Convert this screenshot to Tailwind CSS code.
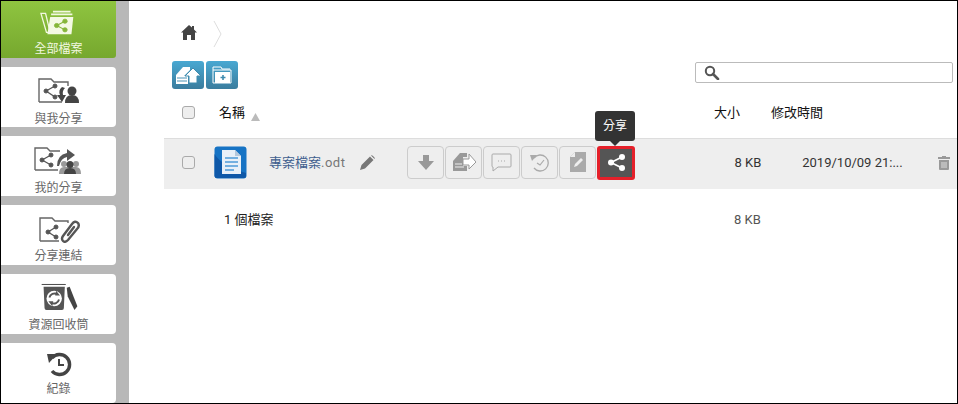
<!DOCTYPE html>
<html lang="zh-Hant">
<head>
<meta charset="UTF-8">
<title>全部檔案</title>
<script src="https://cdn.jsdelivr.net/npm/@tailwindcss/browser@4"></script>
</head>
<body class="bg-white overflow-hidden">
<div class="w-[958px] h-[404px] border border-black flex overflow-hidden font-['Roboto','Noto_Sans_CJK_TC',sans-serif]">
  <!-- sidebar -->
  <nav class="w-[128px] h-full bg-[#b8b8b8] shrink-0 flex flex-col gap-[9px] pr-[13px] overflow-hidden">
    <a class="h-[57px] shrink-0 rounded-br-[3px] bg-gradient-to-b from-[#8fc440] to-[#76a82e] flex flex-col items-center text-[#f2f8e0]">
      <svg class="mt-[9px]" width="37" height="25" viewBox="0 0 40 29" preserveAspectRatio="none">
        <path d="M1 4 L6 4 L11 26 L7 26 Z" fill="none" stroke="#f2f8e0" stroke-width="1.4"/>
        <path d="M14 1 H33 V3 H14Z M12 4 H35 V6 H12Z" fill="#f2f8e0"/>
        <path d="M11 8 H36 L34 28 H8 Z" fill="#f4f9e4"/>
        <g fill="#86b63a" stroke="#86b63a"><circle cx="18" cy="18" r="2.4"/><circle cx="27" cy="13" r="2.4"/><circle cx="27" cy="23" r="2.4"/><path d="M18 18 L27 13 M18 18 L27 23" stroke-width="1.2" fill="none"/></g>
      </svg>
      <span class="text-[12px] leading-[16px] mt-[6px]">全部檔案</span>
    </a>
    <a class="h-[60px] shrink-0 rounded-r-[4px] bg-white flex flex-col items-center text-[#666]">
      <svg class="mt-[10px]" width="42" height="28" viewBox="0 0 42 28">
        <path d="M1 25 V2 H13 L16 5 H30 V9 M24 25 H1" fill="none" stroke="#666" stroke-width="1.4"/>
        <g fill="#555" stroke="#555"><circle cx="8" cy="14" r="2"/><circle cx="17" cy="9" r="2"/><circle cx="17" cy="20" r="2"/><path d="M8 14 L17 9 M8 14 L17 20" stroke-width="1.4" fill="none"/></g>
        <path d="M24 10 Q20 13 22 18 H19 L24 25 L28 18 H25 Q24 14 27 11Z" fill="#444"/>
        <circle cx="34" cy="14" r="4.5" fill="#444"/><path d="M27 26 Q27 18 34 18 Q41 18 41 26Z" fill="#444"/>
      </svg>
      <span class="text-[12px] leading-[16px] mt-[6px]">與我分享</span>
    </a>
    <a class="h-[60px] shrink-0 rounded-r-[4px] bg-white flex flex-col items-center text-[#666]">
      <svg class="mt-[10px]" width="50" height="28" viewBox="0 0 50 28">
        <path d="M1 24 V2 H13 L16 5 H26 M24 24 H1 M1 24" fill="none" stroke="#666" stroke-width="1.4"/>
        <g fill="#555" stroke="#555"><circle cx="8" cy="14" r="2"/><circle cx="17" cy="9" r="2"/><circle cx="17" cy="19" r="2"/><path d="M8 14 L17 9 M8 14 L17 19" stroke-width="1.4" fill="none"/></g>
        <path d="M23 20 Q23 9 33 7 V3 L41 9 L33 15 V11 Q27 12 25 20Z" fill="#555"/>
        <circle cx="30" cy="18" r="3" fill="#999"/><circle cx="42" cy="18" r="3" fill="#999"/><path d="M25 28 Q25 21 30 21 H42 Q47 21 47 28Z" fill="#999"/>
        <circle cx="36" cy="18.500" r="3.500" fill="#444"/><path d="M30 28 Q30 22 36 22 Q42 22 42 28Z" fill="#444"/>
      </svg>
      <span class="text-[12px] leading-[16px] mt-[6px]">我的分享</span>
    </a>
    <a class="h-[60px] shrink-0 rounded-r-[4px] bg-white flex flex-col items-center text-[#666]">
      <svg class="mt-[11px] ml-[2px]" width="42" height="27" viewBox="0 0 42 27">
        <path d="M1 25 V2 H13 L16 5 H29 V7 M20 25 H1" fill="none" stroke="#666" stroke-width="1.4"/>
        <g fill="#555" stroke="#555"><circle cx="9" cy="16" r="2"/><circle cx="17" cy="11" r="2"/><circle cx="17" cy="21" r="2"/><path d="M9 16 L17 11 M9 16 L17 21" stroke-width="1.4" fill="none"/></g>
        <g fill="none" stroke="#555" stroke-width="2.4" stroke-linecap="round"><path d="M24 20 L33 8 Q36 4 39 7 Q41 10 38 13 L29 24 Q26 27 24 25 Q22 23 24 20"/><path d="M29 19 L35 11"/></g>
      </svg>
      <span class="text-[12px] leading-[16px] mt-[5px]">分享連結</span>
    </a>
    <a class="h-[60px] shrink-0 rounded-r-[4px] bg-white flex flex-col items-center text-[#666]">
      <svg class="mt-[9px] ml-[3px]" width="38" height="28" viewBox="0 0 38 29">
        <path d="M0 1 H25 V2 H0Z" fill="#444"/>
        <path d="M2 4 H24 L23 26 Q23 28 21 28 H5 Q3 28 3 26Z" fill="#555"/>
        <circle cx="13" cy="16" r="8" fill="#fff"/>
        <g fill="none" stroke="#555" stroke-width="2"><path d="M8 15 A5.500 5.500 0 0 1 16 11.500"/><path d="M18 17 A5.500 5.500 0 0 1 10 20.500"/></g>
        <path d="M15 8 L19 13 L14 13Z M11 24 L7 19 L12 19Z" fill="#555"/>
        <path d="M26 5 L29 4 L37 24 L34 28 L27 14Z" fill="#444"/>
      </svg>
      <span class="text-[12px] leading-[16px] mt-[6px]">資源回收筒</span>
    </a>
    <a class="h-[60px] shrink-0 rounded-r-[4px] bg-white flex flex-col items-center text-[#666]">
      <svg class="mt-[8px]" width="26" height="26" viewBox="0 0 26 26">
        <path d="M6 7 A10 10 0 1 1 6 20" fill="none" stroke="#444" stroke-width="3.400"/>
        <path d="M1 3 L11 3 L3 12Z" fill="#444"/>
        <path d="M13 8 V14 H18" fill="none" stroke="#444" stroke-width="2"/>
      </svg>
      <span class="text-[12px] leading-[16px] mt-[4px]">紀錄</span>
    </a>
  </nav>

  <!-- main -->
  <main class="flex-1 min-w-0 flex flex-col relative">
    <div class="h-[60px] shrink-0 pl-[52px] flex items-start">
      <svg class="mt-[24px]" width="16" height="15" viewBox="0 0 16 15">
        <path d="M8 0 L11 2.600 V1 H13 V4.400 L16 7.500 L14 7.500 V15 H10 V10 H6 V15 H2 V7.500 H0Z" fill="#444"/>
      </svg>
      <svg class="mt-[20px] ml-[16px]" width="10" height="26" viewBox="0 0 10 26">
        <path d="M1 0 L8 13 L1 26" fill="none" stroke="#ddd" stroke-width="1"/>
      </svg>
    </div>
    <div class="h-[40px] shrink-0 pl-[43px] pr-[4px] flex items-start gap-[2px]">
      <button class="w-[32px] h-[28px] rounded-[3px] bg-gradient-to-b from-[#48a8d2] to-[#3a7d9e] flex items-center justify-center">
        <svg width="26" height="20" viewBox="0 0 26 20">
          <path d="M1 10 L8 2 H15 V5 L9 11 H13 V19 H1Z" fill="#fff"/>
          <path d="M2 13 H12 M2 16 H12" stroke="#4a93b5" stroke-width="1"/>
          <path d="M18 3 L26 11 H22 V18 H14 V11 H10Z" fill="#fff" stroke="#3f8bae" stroke-width="1"/>
        </svg>
      </button>
      <button class="w-[32px] h-[28px] rounded-[3px] bg-gradient-to-b from-[#48a8d2] to-[#3a7d9e] flex items-center justify-center">
        <svg width="20" height="18" viewBox="0 0 20 18">
          <path d="M1 4 V1 H9 L10 3 H18" fill="none" stroke="#fff" stroke-width="1"/>
          <path d="M1 4 H19 V17 H1Z" fill="none" stroke="#fff" stroke-width="1"/>
          <path d="M3 6 H18 V17 H3Z" fill="#fff"/>
          <path d="M11 9 V14 M8.500 11.500 H13.500" stroke="#3f8bae" stroke-width="1.600"/>
        </svg>
      </button>
      <div class="ml-auto w-[258px] h-[21px] mt-px border border-[#bbb] rounded-[2px] flex items-center pl-[8px]">
        <svg width="16" height="15" viewBox="0 0 16 15">
          <circle cx="6" cy="6" r="4.200" fill="none" stroke="#555" stroke-width="2"/>
          <path d="M9 9 L14 14" stroke="#555" stroke-width="2.600" stroke-linecap="round"/>
        </svg>
      </div>
    </div>
    <!-- header row -->
    <div class="h-[37px] pb-[13px] shrink-0 flex items-center text-[13px] text-[#111]">
      <span class="ml-[53px] w-[13px] h-[13px] mb-[2px] rounded-[3px] border border-[#aaa] bg-[#eee]"></span>
      <span class="ml-[24px]">名稱</span>
      <svg class="ml-[6px] mt-[8px]" width="9" height="8" viewBox="0 0 9 8"><path d="M4.500 0 L9 8 H0Z" fill="#bbb"/></svg>
      <span class="ml-[454px]">大小</span>
      <span class="ml-[31px]">修改時間</span>
    </div>
    <!-- file row -->
    <div class="h-[51px] pb-[3px] ml-[35px] shrink-0 border-t border-[#ddd] bg-[#eeeeee] flex items-center text-[13px] relative">
      <span class="ml-[18px] w-[13px] h-[13px] rounded-[3px] border border-[#aaa] bg-[#eee]"></span>
      <svg class="ml-[19px]" width="33" height="33" viewBox="0 0 33 33">
        <rect x="0.500" y="0.500" width="32" height="32" rx="3" fill="#1673c4"/>
        <path d="M0.500 8 Q8 20 32 27 V30 Q32 32 30 32 H3 Q0.500 32 0.500 30Z" fill="#0e58a8"/>
        <path d="M8 4 H21 L27 10 V28 H8Z" fill="#e8f0f8"/>
        <path d="M21 4 V10 H27Z" fill="#b4c8dc"/>
        <path d="M11 12 H24 M11 16 H24 M11 20 H24 M11 24 H20" stroke="#4d9ad8" stroke-width="1.500"/>
      </svg>
      <span class="ml-[22px] text-[#3f5f8f]">專案檔案<span class="text-[#777] tracking-[0.5px]">.odt</span></span>
      <svg class="ml-[15px]" width="15" height="15" viewBox="0 0 15 15"><path d="M0 15 L1.500 10 L10 1.500 L13.500 5 L5 13.500Z M11 0.500 Q12 0 13 1 L14.500 2.500 Q15 3.500 14.500 4Z" fill="#777"/></svg>
      <div class="ml-[32px] flex gap-px">
        <button class="w-[37px] h-[33px] rounded-[4px] border border-[#ccc] flex items-center justify-center">
          <svg width="16" height="15" viewBox="0 0 16 15"><path d="M5 0 H11 V6 H16 L8 15 L0 6 H5Z" fill="#999"/></svg>
        </button>
        <button class="w-[37px] h-[33px] rounded-[4px] border border-[#ccc] flex items-center justify-center">
          <svg width="24" height="20" viewBox="0 0 24 20"><path d="M1 9 L8 1 H15 V5 H11 V14 H15 V19 H1Z" fill="#999"/><path d="M3 12 H10 M3 15 H12" stroke="#eee"/><path d="M17 2 L24 10 L17 17 V13 H11 V7 H17Z" fill="#fff" stroke="#999"/></svg>
        </button>
        <button class="w-[37px] h-[33px] rounded-[4px] border border-[#ccc] flex items-center justify-center">
          <svg width="21" height="19" viewBox="0 0 21 19"><path d="M2 1 H19 Q20 1 20 2 V13 Q20 14 19 14 H7 L2 18 V14 Q1 14 1 13 V2 Q1 1 2 1Z" fill="none" stroke="#aaa"/><path d="M7 8 H8 M10 8 H11 M13 8 H14" stroke="#aaa"/></svg>
        </button>
        <button class="w-[37px] h-[33px] rounded-[4px] border border-[#ccc] flex items-center justify-center">
          <svg width="19" height="19" viewBox="0 0 19 19"><path d="M4 5 A8 8 0 1 1 4 15" fill="none" stroke="#aaa" stroke-width="1.300"/><path d="M0 2 L7 2 L2 8Z" fill="#aaa"/><path d="M7 10 L10 12 L14 7" fill="none" stroke="#aaa" stroke-width="1.200"/></svg>
        </button>
        <button class="w-[37px] h-[33px] rounded-[4px] border border-[#ccc] flex items-center justify-center">
          <svg width="16" height="20" viewBox="0 0 16 20"><path d="M5 0 H16 V20 H0 V5Z" fill="#aaa"/><path d="M5 0 V5 H0Z" fill="#eee"/><path d="M4 15 L5 12 L11 6 L13 8 L7 14Z" fill="#eee"/></svg>
        </button>
        <button class="w-[38px] h-[34px] rounded-[3px] border-[3px] border-[#e5202a] bg-[#555] flex items-center justify-center">
          <svg width="17" height="17" viewBox="0 0 17 17"><g fill="#fff"><circle cx="3" cy="8.500" r="3"/><circle cx="14" cy="3" r="3"/><circle cx="14" cy="14" r="3"/></g><path d="M3 8.500 L14 3 M3 8.500 L14 14" stroke="#fff" stroke-width="1.800"/></svg>
        </button>
      </div>
      <span class="ml-[99px] text-[#333]">8 KB</span>
      <span class="ml-[41px] text-[#333] whitespace-nowrap">2019/10/09 21:...</span>
      <svg class="ml-[35px]" width="12" height="14" viewBox="0 0 12 14"><path d="M4 0 H8 V1 H12 V3 H0 V1 H4Z M1 4 H11 V13 Q11 14 10 14 H2 Q1 14 1 13Z" fill="#999"/><path d="M4 6 V12 M6 6 V12 M8 6 V12" stroke="#eee" stroke-width="0.800"/></svg>
      <div class="absolute left-[431px] -top-[28px] w-[40px] h-[30px] rounded-[3px] bg-[#333] text-white text-[12px] flex items-center justify-center">分享
        <span class="absolute left-[15px] top-[30px] border-x-[5px] border-x-transparent border-t-[5px] border-t-[#333]"></span>
      </div>
    </div>
    <!-- footer row -->
    <div class="h-[61px] ml-[35px] flex items-center text-[13px] text-[#222]">
      <span class="ml-[60px] w-[500px]">1 個檔案</span>
      <span class="ml-[10px] text-[#555]">8 KB</span>
    </div>
  </main>
</div>
</body>
</html>
